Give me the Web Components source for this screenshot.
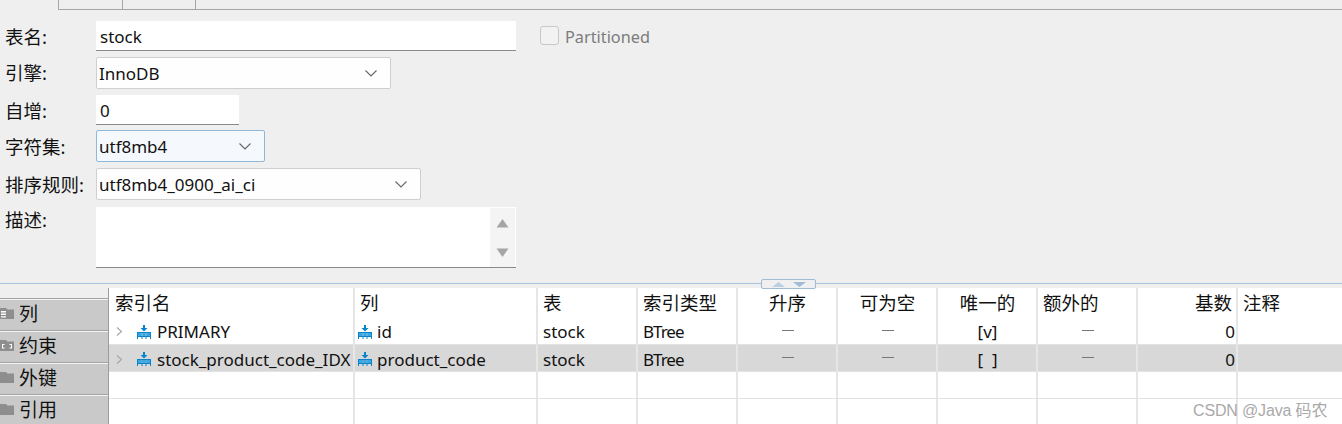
<!DOCTYPE html>
<html lang="zh"><head><meta charset="utf-8">
<style>
html,body{margin:0;padding:0;background:#efefef;height:424px;overflow:hidden}
body{font:17px "Noto Sans","Noto Sans CJK SC",sans-serif;color:#111;}
</style></head><body>
<db-editor></db-editor>
<script>
const CJK='"Noto Sans","Noto Sans CJK SC",sans-serif';
function def(name,css,html){
  customElements.define(name,class extends HTMLElement{
    constructor(){super();const r=this.attachShadow({mode:'open'});r.innerHTML=`<style>${css}</style>`+(typeof html==='function'?html(this):html);}
  });
}
const chev=`<svg width="14" height="9" viewBox="0 0 14 9"><path d="M1.5 1.5 7 7l5.5-5.5" fill="none" stroke="#666" stroke-width="1.1"/></svg>`;
const idx=`<svg width="14" height="14" viewBox="0 0 14 14" style="display:block;flex:none"><path d="M6 0h2v3h2.500L7 6.500 3.500 3H6z" fill="#0a84c8"/><path d="M0 7h14v1H0zM0 11h14v1H0zM0 8h1v6H0zM4.500 8h1v6h-1zM8.500 8h1v6h-1zM13 8h1v6h-1z" fill="#0a84c8"/><path d="M1 8h3.500v3H1zM5.500 8h3v3h-3zM9.500 8H13v3H9.500z" fill="#38a6e0"/></svg>`;
def('tab-strip',`:host{display:flex;height:9px;box-sizing:border-box;padding-left:58px}
 div{border-bottom:1px solid #a6a6a6;border-left:1px solid #a6a6a6;box-sizing:border-box;height:10px}
 .a{width:64px}.b{width:73px}.c{flex:1}`,`<div class="a"></div><div class="b"></div><div class="c"></div>`);
def('form-row',`:host{display:flex;align-items:flex-start}
 .l{width:96px;padding-left:5px;box-sizing:border-box;font-size:18.5px;line-height:var(--lh,32px);white-space:nowrap;flex:none}`,
 `<div class="l"><slot name="label"></slot></div><slot></slot>`);
def('text-field',`:host{display:flex;align-items:center;box-sizing:border-box;height:30px;background:#fff;border-bottom:1px solid #8a8a8a;padding:2px 4px 0;font-size:17px}`,`<slot></slot>`);
def('select-field',`:host{display:flex;align-items:center;justify-content:space-between;box-sizing:border-box;height:32px;background:#fefefe;border:1px solid #cfcfcf;border-radius:2px;padding:1px 12px 0 2px;font-size:17px}
 :host([focus]){background:#f5f9fd;border-color:#90b8d8}`,`<slot></slot>${chev}`);
def('memo-field',`:host{display:flex;justify-content:flex-end;box-sizing:border-box;height:61px;background:#fff;border-bottom:1px solid #8a8a8a}
 .s{width:25px;margin:1px 1px 0 0;background:#f4f4f4;display:flex;flex-direction:column;justify-content:space-between;align-items:center;padding:10px 0 9px;box-sizing:border-box}`,
 `<div class="s"><svg width="13" height="10" viewBox="0 0 13 10"><path d="M6.500 1 12.500 9.500H.5z" fill="#a6a6a6"/></svg><svg width="13" height="10" viewBox="0 0 13 10"><path d="M.5 .5h12L6.500 9z" fill="#a6a6a6"/></svg></div>`);
def('check-option',`:host{display:flex;align-items:center;gap:6px;color:#7c7c7c;font-size:16.3px;height:32px;margin-left:24px}
 i{display:block;width:19px;height:19px;box-sizing:border-box;border:1px solid #c8c8c8;border-radius:3px;background:#f2f2f2;margin-top:-3px}`,`<i></i><slot></slot>`);
def('split-bar',`:host{display:block;position:relative;height:4px;border-top:1px solid #a9c2dc;box-sizing:content-box}
 .h{position:absolute;left:761px;top:-5px;width:55px;height:10px;box-sizing:border-box;background:#f0f0f0;border:1px solid #9fbbd8;border-radius:2px;display:flex;align-items:center;justify-content:center;gap:8px}`,
 `<div class="h"><svg width="13" height="5" viewBox="0 0 13 5"><path d="M6.500 0 13 5H0z" fill="#bccfe2"/></svg><svg width="13" height="5" viewBox="0 0 13 5"><path d="M0 0h13L6.500 5z" fill="#9fbbd8"/></svg></div>`);
def('side-tab',`:host{display:flex;align-items:center;gap:5px;height:32px;box-sizing:border-box;background:#c9c9c9;border-top:1px solid #a3a3a3;box-shadow:inset 0 1px 0 #f4f4f4;font-size:19px;padding:0 0 4px;overflow:hidden}
 svg{flex:none}`,h=>{
  const k=h.getAttribute('mark');
  const m=k==='list'?'<path d="M1 5h5v1.400H1zM1 7.600h5V9H1zM1 10.200h5v1.400H1z" fill="#fff"/>':k==='braces'?'<path d="M2 6h2.500v1H3v2.400h1.500v1H2zM9.500 6H12v4.400H9.500v-1H11V7H9.500z" fill="#fff"/>':'';
  return `<svg width="14" height="14" viewBox="0 0 14 14"><path d="M0 2h6l1.500 1.500H14V13H0z" fill="#8e8e8e"/>${m}</svg><slot></slot>`;
 });
def('grid-row',`:host{display:grid;grid-template-columns:246px 183px 100px 100px 100px 100px 100px 100px 100px 105px;box-sizing:border-box;font-size:17px;border-bottom:1px solid #e3e3e3}
 :host([sel]){background:#d8d8d8;}`,`<slot></slot>`);
def('grid-cell',`:host{display:flex;align-items:center;box-sizing:border-box;border-right:2px solid #e6e6e6;padding:var(--cell-top,0) 5px var(--cell-bottom,0);overflow:hidden;white-space:nowrap;min-width:0;height:100%}
 :host([c]){justify-content:center;padding-left:6px}:host([r]){justify-content:flex-end;padding-right:1px}
 :host(:last-child){border-right:0}`,`<slot></slot>`);
def('index-name',`:host{display:flex;align-items:center;gap:6px;margin-left:1px}
 .a{width:16px;flex:none;display:flex}`,
 `<span class="a"><svg width="9" height="11" viewBox="0 0 9 11"><path d="M2 1.500 6.500 5.500 2 9.500" fill="none" stroke="#a5a5a5" stroke-width="1.100"/></svg></span>${idx}<slot></slot>`);
def('index-col',`:host{display:flex;align-items:center;gap:5px;margin-left:-2px}`,`${idx}<slot></slot>`);
def('dash-mark',`:host{display:block;width:12px;height:1px;background:#777;margin-top:-3px}`,``);
def('side-tabs',`:host{display:block;padding-top:10px;box-sizing:border-box;border-right:1px solid #9c9c9c;height:136px;width:109px;flex:none;overflow:hidden}`,`<slot></slot>`);
def('index-grid',`:host{display:block;flex:1;background:#fff;height:136px;overflow:hidden}`,`<slot></slot>`);
def('water-mark',`:host{position:absolute;left:1193px;top:397px;font:16px "Liberation Sans","Noto Sans CJK SC",sans-serif;color:#a9a9a9;letter-spacing:-.15px;white-space:nowrap}`,`<slot></slot>`);
const cols=(a)=>a.map(([t,at])=>`<grid-cell ${at||''}>${t}</grid-cell>`).join('');
const row=(name,col,uniq,sel)=>`<grid-row ${sel?'sel':''} style="height:${sel?27:26}px;${sel?'--cell-top:2px':''}">
 <grid-cell><index-name>${name}</index-name></grid-cell><grid-cell><index-col>${col}</index-col></grid-cell>
 <grid-cell>stock</grid-cell><grid-cell><span style="letter-spacing:-1px">BTree</span></grid-cell>
 <grid-cell c><dash-mark></dash-mark></grid-cell><grid-cell c><dash-mark></dash-mark></grid-cell>
 <grid-cell c style="white-space:pre">${uniq}</grid-cell><grid-cell c><dash-mark></dash-mark></grid-cell>
 <grid-cell r>0</grid-cell><grid-cell></grid-cell></grid-row>`;
const empty=h=>`<grid-row style="height:${h}px">${'<grid-cell></grid-cell>'.repeat(10)}</grid-row>`;
def('db-editor',`:host{display:block;position:relative;width:1342px;height:424px;overflow:hidden;font-family:${CJK}}
 .form{display:flex;flex-direction:column;padding-top:12px}
 .mid{display:flex}
 .f1{width:420px}.f2{width:295px}.f3{width:143px}.f4{width:169px}.f5{width:325px}.f6{width:420px}
 form-row span[slot]{display:block}`,
 `<tab-strip></tab-strip>
 <div class="form">
  <form-row style="height:36px"><span slot="label">表名:</span><text-field class="f1">stock</text-field><check-option>Partitioned</check-option></form-row>
  <form-row style="height:38px"><span slot="label">引擎:</span><select-field class="f2">InnoDB</select-field></form-row>
  <form-row style="height:35px"><span slot="label">自增:</span><text-field class="f3">0</text-field></form-row>
  <form-row style="height:38px;--lh:34px"><span slot="label">字符集:</span><select-field class="f4" focus>utf8mb4</select-field></form-row>
  <form-row style="height:39px;--lh:34px"><span slot="label">排序规则:</span><select-field class="f5">utf8mb4_0900_ai_ci</select-field></form-row>
  <form-row style="height:76px;--lh:26px"><span slot="label">描述:</span><memo-field class="f6"></memo-field></form-row>
 </div>
 <split-bar></split-bar>
 <div class="mid">
  <side-tabs><side-tab mark="list">列</side-tab><side-tab mark="braces">约束</side-tab><side-tab>外键</side-tab><side-tab>引用</side-tab></side-tabs>
  <index-grid>
   <grid-row style="height:31px;border-bottom:0;font-size:18.5px;--cell-bottom:3px">
    <grid-cell style="padding-left:6px">索引名</grid-cell>${cols([['列'],['表'],['索引类型'],['升序','c'],['可为空','c'],['唯一的','c'],['额外的'],['基数','r style="padding-right:4px"'],['注释']])}</grid-row>
   ${row('PRIMARY','id','[v]')}${row('stock_product_code_IDX','product_code','[  ]',1)}${empty(27)}${empty(26)}
  </index-grid>
 </div>
 <water-mark>CSDN @Java 码农</water-mark>`);
</script></body></html>
